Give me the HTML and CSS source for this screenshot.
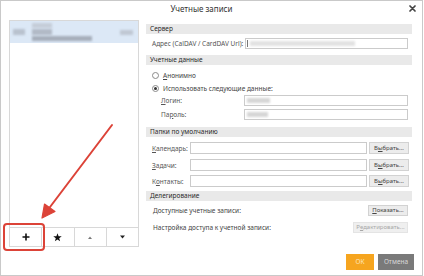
FILE: index.html
```html
<!DOCTYPE html>
<html>
<head>
<meta charset="utf-8">
<link rel="stylesheet" href="styles.css">
</head>
<body>
<div class="window">
  <div class="titlebar">
    <div class="title">Учетные записи</div>
    <div class="close"><svg width="7" height="7" viewBox="0 0 7 7"><path d="M1 1L6 6M6 1L1 6" stroke="#444" stroke-width="1.7" stroke-linecap="round"/></svg></div>
  </div>
  <div class="main">
    <div class="left">
      <div class="list">
        <div class="item">
          <span class="blk avatar"></span>
          <div class="lines">
            <span class="blk l1"></span>
            <span class="blk l2"></span>
            <span class="blk l3"></span>
          </div>
          <span class="blk tail"></span>
        </div>
      </div>
      <div class="toolbar">
        <div class="tbtn"><svg width="8" height="8" viewBox="0 0 8 8"><path d="M4 0.5V7.5M0.5 4H7.5" stroke="#111" stroke-width="1.6"/></svg></div>
        <div class="tbtn"><svg width="9" height="9" viewBox="0 0 10 10"><path d="M5 0.3L6.2 3.6L9.7 3.7L6.9 5.8L7.9 9.3L5 7.2L2.1 9.3L3.1 5.8L0.3 3.7L3.8 3.6Z" fill="#111"/></svg></div>
        <div class="tbtn"><svg width="4" height="3" viewBox="0 0 4 3"><path d="M0 3L2 0.5L4 3Z" fill="#777"/></svg></div>
        <div class="tbtn"><svg width="5" height="4" viewBox="0 0 5 4"><path d="M0 0.5H5L2.5 3.5Z" fill="#222"/></svg></div>
      </div>
    </div>
    <div class="right">
      <div class="section">Сервер</div>
      <div class="row r-addr">
        <span class="label">Адрес (CalDAV / CardDAV Url):</span>
        <div class="input wide"><span class="caret"></span><span class="blk addr"></span></div>
      </div>

      <div class="section s2">Учетные данные</div>
      <div class="row radio-row r1">
        <span class="radio"></span><span class="label dark"><u>А</u>нонимно</span>
      </div>
      <div class="row radio-row r2">
        <span class="radio on"></span><span class="label dark">Использовать следующие данные:</span>
      </div>
      <div class="row cred r3">
        <span class="label"><u>Л</u>огин:</span>
        <div class="input wide"><span class="blk cred-b"></span></div>
      </div>
      <div class="row cred r4">
        <span class="label">Па<u>р</u>оль:</span>
        <div class="input wide"><span class="blk cred-b short"></span></div>
      </div>

      <div class="section s3">Папки по умолчанию</div>
      <div class="row folder f1">
        <span class="label flabel"><u>К</u>алендарь:</span>
        <div class="input fin"></div>
        <div class="btn">В<u>ы</u>брать...</div>
      </div>
      <div class="row folder f2">
        <span class="label flabel"><u>З</u>адачи:</span>
        <div class="input fin"></div>
        <div class="btn">В<u>ы</u>брать...</div>
      </div>
      <div class="row folder f3">
        <span class="label flabel">К<u>о</u>нтакты:</span>
        <div class="input fin"></div>
        <div class="btn">В<u>ы</u>брать...</div>
      </div>

      <div class="section s4">Делегирование</div>
      <div class="row deleg d1">
        <span class="label dark">Доступные учетные записи:</span>
        <div class="btn show"><u>П</u>оказать...</div>
      </div>
      <div class="row deleg d2">
        <span class="label dark">Настройка доступа к учетной записи:</span>
        <div class="btn edit disabled">Р<u>е</u>дактировать...</div>
      </div>
    </div>
  </div>
  <div class="footer">
    <div class="fbtn ok">ОК</div>
    <div class="fbtn cancel">Отмена</div>
  </div>
  <svg class="annot" width="424" height="276" viewBox="0 0 424 276">
    <rect x="4" y="224" width="40" height="26" rx="3" fill="none" stroke="#dc4338" stroke-width="2"/>
    <path d="M112 125L47 211" stroke="#dc4338" stroke-width="2" stroke-linecap="round"/>
    <path d="M42 218L44.5 204L55 211.5Z" fill="#dc4338" stroke="#dc4338" stroke-width="1.2" stroke-linejoin="round"/>
  </svg>
</div>
</body>
</html>
```

FILE: styles.css
```css
* { box-sizing: border-box; }
html, body { margin: 0; padding: 0; background: #ffffff; }
body {
  width: 424px;
  height: 276px;
  overflow: hidden;
  font-family: "Noto Sans", "Open Sans", sans-serif;
  font-size: 6.5px;
  color: #444;
}
u { text-decoration: underline; text-underline-offset: 1px; }

.window {
  position: relative;
  width: 423px;
  height: 276px;
  border: 1px solid #c9c9c9;
  background: #fff;
  display: flex;
  flex-direction: column;
}

.titlebar {
  height: 19px;
  display: flex;
  align-items: center;
}
.title {
  flex: 1;
  text-align: center;
  font-size: 8px;
  color: #333;
  padding-bottom: 4px;
}
.close {
  width: 20px;
  display: flex;
  justify-content: center;
  padding-bottom: 4px;
}

.main {
  display: flex;
  gap: 7px;
  padding: 0 10px 0 8px;
  height: 233px;
}

.left { width: 130px; display: flex; flex-direction: column; }
.list {
  height: 208px;
  border: 1px solid #d8d8d8;
}
.item {
  height: 22px;
  background: #dce8f6;
  display: flex;
  align-items: center;
  padding: 0 5px 0 3px;
}
.blk { display: block; filter: blur(1.2px); }
.avatar { width: 12px; height: 6px; background: #b9c2ce; }
.lines { display: flex; flex-direction: column; gap: 1px; margin-left: 7px; flex: 1; }
.l1 { width: 20px; height: 5px; background: #c5cdd8; }
.l2 { width: 20px; height: 6px; background: #b2bac6; }
.l3 { width: 60px; height: 5px; background: #a7afbb; }
.tail { width: 13px; height: 5px; background: #c0c8d3; }

.toolbar {
  display: flex;
  height: 19px;
  border: 1px solid #d8d8d8;
  border-top: none;
}
.tbtn {
  flex: 1;
  display: flex;
  align-items: center;
  justify-content: center;
  border-left: 1px solid #d8d8d8;
}
.tbtn:first-child { border-left: none; }

.right {
  width: 266px;
  padding-top: 4px;
  display: flex;
  flex-direction: column;
}
.section {
  height: 10px;
  line-height: 10px;
  background: #e9e9e9;
  color: #2a2a2a;
  padding-left: 4px;
  font-size: 6.5px;
}
.s2 { margin-top: 6px; }
.s3 { margin-top: 7px; }
.s4 { margin-top: 4px; }

.row {
  display: flex;
  align-items: center;
  padding: 0 4px 0 6px;
}
.label { color: #555; white-space: nowrap; }
.label.dark { color: #444; }

.input {
  border: 1px solid #cbcbcb;
  background: #fff;
  height: 11px;
  display: flex;
  align-items: center;
}
.wide { margin-left: auto; width: 164px; padding-left: 1px; }

.r-addr { margin-top: 4px; height: 11px; padding-right: 4px; }
.r-addr .wide { width: 163px; }
.caret { width: 1px; height: 7px; background: #777; }
.addr { width: 105px; height: 5px; background: #e2e2e2; margin-left: 2px; }

.radio-row { height: 10px; }
.r1 { margin-top: 5px; }
.r2 { margin-top: 3px; }
.radio {
  width: 7px;
  height: 7px;
  border: 1px solid #8a8a8a;
  border-radius: 50%;
  margin-right: 4px;
  display: flex;
  align-items: center;
  justify-content: center;
}
.radio.on::after {
  content: "";
  width: 3px;
  height: 3px;
  border-radius: 50%;
  background: #333;
}

.cred { height: 11px; padding-left: 15px; }
.r3 { margin-top: 2px; }
.r4 { margin-top: 3px; }
.cred-b { width: 23px; height: 5px; background: #d6d6d6; margin-left: 1px; }
.cred-b.short { width: 21px; }

.folder { height: 12px; padding-right: 3px; }
.f1 { margin-top: 5px; }
.f2 { margin-top: 5px; }
.f3 { margin-top: 4px; }
.flabel { width: 38px; }
.fin { flex: 1; height: 12px; margin-left: 0; }

.btn {
  height: 12px;
  line-height: 10px;
  border: 1px solid #d2d2d2;
  background: #ececec;
  color: #444;
  font-size: 6px;
  text-align: center;
  white-space: nowrap;
}
.folder .btn { width: 40px; margin-left: 2px; }

.deleg { height: 11px; padding-left: 7px; padding-right: 4px; justify-content: space-between; }
.d1 { margin-top: 4px; }
.d2 { margin-top: 6px; }
.deleg .btn { height: 11px; line-height: 9px; }
.show { width: 40px; }
.edit { width: 55px; }
.btn.disabled { color: #a8a8a8; background: #efefef; border-color: #e4e4e4; }

.footer {
  display: flex;
  justify-content: flex-end;
  gap: 4px;
  padding: 1px 8px 0 0;
}
.fbtn {
  height: 16px;
  line-height: 16px;
  text-align: center;
  font-size: 6.5px;
}
.ok { width: 28px; background: #f6a51f; color: #fde7bf; }
.cancel { width: 36px; background: #7a7a7a; color: #d9d9d9; }

.annot {
  position: absolute;
  left: -1px;
  top: -1px;
  pointer-events: none;
}
```
